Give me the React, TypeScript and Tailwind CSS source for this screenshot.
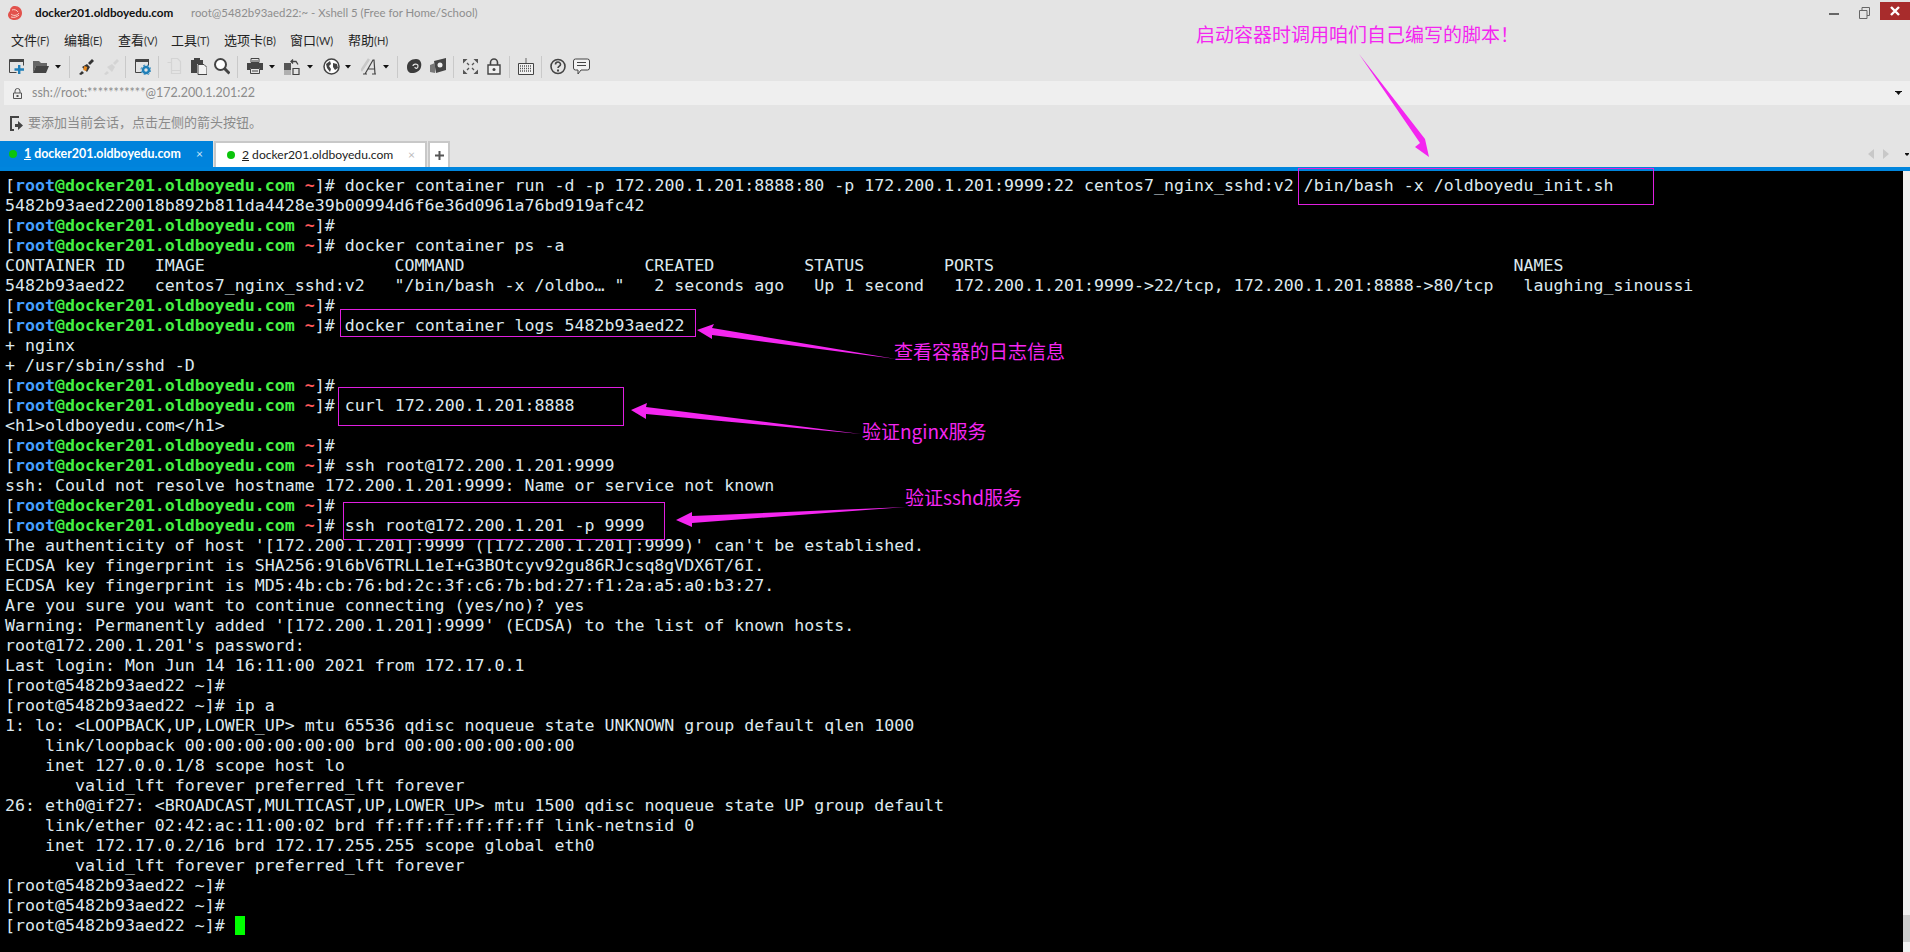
import React from "react";

const ui = "font-['Lato','Noto_Sans_CJK_SC',sans-serif]";
const cjk = "font-['Noto_Sans_CJK_SC',sans-serif]";

const P = ({ children }: { children?: React.ReactNode }) => (
  <>
    <span>[</span>
    <span className="font-bold text-[#46a0ff]">root</span>
    <span className="font-bold text-[#44f044]">@docker201.oldboyedu.com</span>
    <span> </span>
    <span className="font-bold text-[#ff5a5a]">~</span>
    <span>]# </span>
    {children}
  </>
);

const lines: React.ReactNode[] = [
  <P>docker container run -d -p 172.200.1.201:8888:80 -p 172.200.1.201:9999:22 centos7_nginx_sshd:v2 /bin/bash -x /oldboyedu_init.sh</P>,
  "5482b93aed220018b892b811da4428e39b00994d6f6e36d0961a76bd919afc42",
  <P />,
  <P>docker container ps -a</P>,
  "CONTAINER ID   IMAGE                   COMMAND                  CREATED         STATUS        PORTS                                                    NAMES",
  "5482b93aed22   centos7_nginx_sshd:v2   \"/bin/bash -x /oldbo… \"   2 seconds ago   Up 1 second   172.200.1.201:9999->22/tcp, 172.200.1.201:8888->80/tcp   laughing_sinoussi",
  <P />,
  <P>docker container logs 5482b93aed22</P>,
  "+ nginx",
  "+ /usr/sbin/sshd -D",
  <P />,
  <P>curl 172.200.1.201:8888</P>,
  "<h1>oldboyedu.com</h1>",
  <P />,
  <P>ssh root@172.200.1.201:9999</P>,
  "ssh: Could not resolve hostname 172.200.1.201:9999: Name or service not known",
  <P />,
  <P>ssh root@172.200.1.201 -p 9999</P>,
  "The authenticity of host '[172.200.1.201]:9999 ([172.200.1.201]:9999)' can't be established.",
  "ECDSA key fingerprint is SHA256:9l6bV6TRLL1eI+G3BOtcyv92gu86RJcsq8gVDX6T/6I.",
  "ECDSA key fingerprint is MD5:4b:cb:76:bd:2c:3f:c6:7b:bd:27:f1:2a:a5:a0:b3:27.",
  "Are you sure you want to continue connecting (yes/no)? yes",
  "Warning: Permanently added '[172.200.1.201]:9999' (ECDSA) to the list of known hosts.",
  "root@172.200.1.201's password:",
  "Last login: Mon Jun 14 16:11:00 2021 from 172.17.0.1",
  "[root@5482b93aed22 ~]#",
  "[root@5482b93aed22 ~]# ip a",
  "1: lo: <LOOPBACK,UP,LOWER_UP> mtu 65536 qdisc noqueue state UNKNOWN group default qlen 1000",
  "    link/loopback 00:00:00:00:00:00 brd 00:00:00:00:00:00",
  "    inet 127.0.0.1/8 scope host lo",
  "       valid_lft forever preferred_lft forever",
  "26: eth0@if27: <BROADCAST,MULTICAST,UP,LOWER_UP> mtu 1500 qdisc noqueue state UP group default",
  "    link/ether 02:42:ac:11:00:02 brd ff:ff:ff:ff:ff:ff link-netnsid 0",
  "    inet 172.17.0.2/16 brd 172.17.255.255 scope global eth0",
  "       valid_lft forever preferred_lft forever",
  "[root@5482b93aed22 ~]#",
  "[root@5482b93aed22 ~]#",
  <>
    [root@5482b93aed22 ~]# <span className="inline-block w-[10px] h-[19px] bg-[#00ff00] align-top" />
  </>,
];

const Sep = ({ ml }: { ml: number }) => (
  <div className="w-px h-[22px] bg-[#c9c9c9] shrink-0" style={{ marginLeft: ml }} />
);
const Caret = ({ ml }: { ml: number }) => (
  <svg width="6" height="4" viewBox="0 0 6 4" className="shrink-0" style={{ marginLeft: ml }}>
    <path d="M0 0h6L3 3.5z" fill="#111" />
  </svg>
);
const I = ({ ml, w = 16, h = 17, children }: { ml: number; w?: number; h?: number; children: React.ReactNode }) => (
  <svg width={w} height={h} viewBox={`0 0 ${w} ${h}`} className="shrink-0" style={{ marginLeft: ml }}>
    {children}
  </svg>
);

const Toolbar = () => (
  <div className="flex items-center h-[29px] pl-[9px]">
    <I ml={0}>
      <path d="M.5 1.5h14v6M.5 1.5v13h7" fill="none" stroke="#444" />
      <path d="M1 1h14v3H1z" fill="#444" />
      <path d="M11 8h2.4v3.3H17v2.4h-3.6V17H11v-3.3H7.500v-2.4H11z" fill="#1f7fb8" transform="translate(-2 -1)" />
    </I>
    <I ml={8}>
      <path d="M0 3h6l2 2h6v3H3L0 15z" fill="#666" />
      <path d="M3 8h13l-3 7H0z" fill="#444" />
    </I>
    <Caret ml={6} />
    <Sep ml={8} />
    <I ml={8}>
      <path d="M1 16l3-3 2 2-3 2zM4 9l5-3 3 3-3 5z" fill="#333" />
      <path d="M6 9l3 1M5.500 11l3 1" stroke="#e8891f" strokeWidth="2" />
      <path d="M10 5l4-4 2 2-4 4z" fill="#333" />
    </I>
    <I ml={9}>
      <path d="M1 16l3-3 2 2-3 2zM4 9l5-3 3 3-3 5z" fill="#d4d4d4" />
      <path d="M10 5l4-4 2 2-4 4z" fill="#d4d4d4" />
    </I>
    <Sep ml={6} />
    <I ml={9} w={16}>
      <path d="M.5 1.500h13v6M.5 1.500v13h6" fill="none" stroke="#444" />
      <path d="M1 1h13v3H1z" fill="#444" />
      <circle cx="11" cy="12" r="3" fill="none" stroke="#1f7fb8" strokeWidth="2.500" />
      <circle cx="11" cy="12" r="5" fill="none" stroke="#1f7fb8" strokeWidth="1" strokeDasharray="2 2" />
    </I>
    <Sep ml={7} />
    <I ml={8}>
      <path d="M4.500.5h6l3 3v9h-9zM.5 4.500h4v11h9v-3" fill="none" stroke="#d4d4d4" strokeWidth="1.200" />
    </I>
    <I ml={8}>
      <path d="M0 2h3V0h6v2h3v4H6v9H0z" fill="#444" />
      <path d="M7 6.500h6l3 3v7H7z" fill="#f2f2f2" stroke="#444" />
    </I>
    <I ml={7}>
      <circle cx="6.500" cy="6.500" r="5.500" fill="#fff" stroke="#444" strokeWidth="2" />
      <path d="M10.500 10.500l5 5" stroke="#444" strokeWidth="3" />
    </I>
    <Sep ml={7} />
    <I ml={9}>
      <path d="M4 0.500h8v4H4z" fill="none" stroke="#444" />
      <path d="M0 5h16v7h-3v-2H3v2H0z" fill="#444" />
      <path d="M3.500 10.500h9v5h-9z" fill="none" stroke="#444" />
      <path d="M5 3h6M5 13h6" stroke="#444" />
    </I>
    <Caret ml={6} />
    <I ml={9}>
      <path d="M0 5h7v7H0z" fill="#555" />
      <path d="M0 12h7v5H0z" fill="#b0b0b0" />
      <path d="M9 10.500h6v6H9z" fill="none" stroke="#444" strokeWidth="1.200" />
      <path d="M9 1.500l-2 2 2 2M7 3.500h5l2 3" fill="none" stroke="#444" strokeWidth="1.300" />
    </I>
    <Caret ml={7} />
    <I ml={10} w={17}>
      <circle cx="8.500" cy="8.500" r="7.500" fill="#fff" stroke="#444" strokeWidth="1.500" />
      <path d="M3 6l4-3 1 3-2 2 2 3-1 3-3-4zM10 5l4 1 1 4-3 2-2-3z" fill="#444" />
    </I>
    <Caret ml={5} />
    <I ml={10} w={16}>
      <path d="M0 13L8 1" stroke="#c8c8c8" strokeWidth="2.500" />
      <path d="M2 16h4M11 16h4M4 16L12 2h1l1 14M7 11h7" fill="none" stroke="#444" strokeWidth="1.200" />
    </I>
    <Caret ml={6} />
    <Sep ml={8} />
    <I ml={8} w={17}>
      <path d="M1 9c0-5 4-8 9-8s6 5 5 8c-1 4-5 6-9 6-3 0-5-2-5-6z" fill="#3c3c3c" />
      <path d="M7 8c0-2 5-3 5 0s-3 3-3 1" fill="none" stroke="#e4e4e4" strokeWidth="1.200" />
    </I>
    <I ml={7}>
      <path d="M4 3l12-3v12l-10 3z" fill="#444" />
      <path d="M0 7l5-2v10l-5-1z" fill="#777" />
      <circle cx="10" cy="7" r="2.500" fill="#eee" />
    </I>
    <Sep ml={7} />
    <I ml={9} w={15} h={15}>
      <path d="M0 0h4.500L0 4.500zM15 0v4.500L10.500 0zM0 15v-4.500L4.500 15zM15 15h-4.500L15 10.500z" fill="#555" />
      <path d="M4 4l2 2M11 4L9 6M4 11l2-2M11 11L9 9" stroke="#555" strokeWidth="1.300" />
    </I>
    <I ml={9} w={14}>
      <path d="M3.500 7V4.500a3.500 3.500 0 017 0V7" fill="none" stroke="#444" strokeWidth="1.600" />
      <path d="M1 7h12v9H1z" fill="#f0f0f0" stroke="#444" strokeWidth="1.400" />
      <circle cx="7" cy="11.500" r="1.500" fill="#444" />
    </I>
    <Sep ml={8} />
    <I ml={8}>
      <path d="M8 0v5" stroke="#666" />
      <path d="M.5 5.500h15v11H.5z" fill="#f2f2f2" stroke="#444" />
      <path d="M2 8h12M2 10.500h12M2 13h12" stroke="#555" strokeDasharray="1 1" strokeWidth="1.400" />
    </I>
    <Sep ml={7} />
    <I ml={8}>
      <circle cx="8" cy="8.500" r="7" fill="none" stroke="#444" strokeWidth="1.600" />
      <path d="M5.500 6.500a2.500 2.500 0 115 0c0 1.500-2.500 1.800-2.500 3.500" fill="none" stroke="#444" strokeWidth="1.600" />
      <path d="M7 11.500h2v2H7z" fill="#444" />
    </I>
    <I ml={7} w={17}>
      <path d="M2.500 1h12a2 2 0 012 2v7a2 2 0 01-2 2H8l-3 4v-4H2.500a2 2 0 01-2-2V3a2 2 0 012-2z" fill="#f2f2f2" stroke="#444" />
      <path d="M4 4.500h9M4 7.500h9" stroke="#444" />
    </I>
  </div>
);

const MenuItem = ({ t, k, w }: { t: string; k: string; w: number }) => (
  <div className="shrink-0 text-[#222]" style={{ width: w }}>
    <span className="text-[13px]">{t}</span>
    <span className="text-[11px] text-[#333]">({k})</span>
  </div>
);

const Dot = () => <span className="w-2 h-2 rounded-full bg-[#0cc40c] shrink-0" />;

export default function App() {
  return (
    <div className={`relative flex flex-col w-[1910px] h-[952px] overflow-hidden bg-[#e4e4e4] ${ui}`}>
      {/* title bar */}
      <div className="flex items-center h-[26px] shrink-0 relative">
        <svg width="16" height="16" viewBox="0 0 16 16" className="ml-[7px] shrink-0">
          <path d="M8 1c4 0 7 3 7 7s-3 7-7 7-7-2-7-5c0-2 1-3 2-4 0-3 2-5 5-5z" fill="#e2524c" />
          <path d="M4 9c2 2 6 2 8-1M5 5c2-1 5 0 6 2M4 12c3 1 6 0 8-2" fill="none" stroke="#fbd0c8" strokeWidth="1" />
        </svg>
        <span className="ml-[12px] w-[156px] text-[11.700px] font-bold text-[#111] whitespace-nowrap">docker201.oldboyedu.com</span>
        <span className="text-[11.400px] text-[#8e8e8e] whitespace-nowrap">root@5482b93aed22:~ - Xshell 5 (Free for Home/School)</span>
        <div className="ml-auto flex items-center h-full">
          <div className="w-[10px] h-[2px] bg-[#666] mt-[2px]" />
          <svg width="11" height="12" viewBox="0 0 11 12" className="ml-[20px] mb-[1px]">
            <path d="M.5 3.500h7.500v8H.5zM3 3V.5h7.500v8H8" fill="none" stroke="#666" />
          </svg>
          <div className="ml-[10px] flex items-center justify-center w-[30px] h-[18px] mt-[-4px] bg-[#a82c2c]">
            <svg width="10" height="10" viewBox="0 0 10 10">
              <path d="M1 1l8 8M9 1L1 9" stroke="#fff" strokeWidth="2.400" />
            </svg>
          </div>
        </div>
      </div>
      {/* menu */}
      <div className="flex items-center h-[26px] shrink-0 pl-[11px]">
        <MenuItem t="文件" k="F" w={53} />
        <MenuItem t="编辑" k="E" w={54} />
        <MenuItem t="查看" k="V" w={53} />
        <MenuItem t="工具" k="T" w={53} />
        <MenuItem t="选项卡" k="B" w={66} />
        <MenuItem t="窗口" k="W" w={58} />
        <MenuItem t="帮助" k="H" w={60} />
      </div>
      <Toolbar />
      {/* address bar */}
      <div className="flex items-center h-[24px] shrink-0 ml-[4px] pl-[9px] bg-[#efefef]">
        <svg width="9" height="11" viewBox="0 0 9 11" className="shrink-0">
          <path d="M2 5V3a2.500 2.500 0 015 0v2" fill="none" stroke="#555" />
          <path d="M.5 5h8v5.500h-8z" fill="none" stroke="#555" />
          <path d="M3.500 7h2v2h-2z" fill="#555" />
        </svg>
        <span className="ml-[10px] text-[12.500px] text-[#8c8c8c] whitespace-nowrap">ssh://root:***********@172.200.1.201:22</span>
        <svg width="7" height="5" viewBox="0 0 7 5" className="ml-auto mr-[8px]">
          <path d="M0 0h7v1H6L3.500 4 1 1H0z" fill="#111" />
        </svg>
      </div>
      {/* hint row */}
      <div className="flex items-center h-[36px] shrink-0 pl-[10px]">
        <svg width="13" height="15" viewBox="0 0 13 15" className="shrink-0">
          <path d="M9 1H1v13h3" fill="none" stroke="#444" strokeWidth="2" />
          <path d="M5 8h3V5l5 4.500L8 14v-3H5z" fill="#444" />
        </svg>
        <span className="ml-[5px] text-[13px] text-[#8a8a8a] whitespace-nowrap">要添加当前会话，点击左侧的箭头按钮。</span>
      </div>
      {/* tabs */}
      <div className="flex h-[26px] shrink-0 items-stretch relative">
        <div className="flex items-center w-[213px] bg-[#0083dc] text-white pl-[9px]">
          <Dot />
          <span className="ml-[7px] text-[12.400px] font-bold whitespace-nowrap"><span className="underline">1</span> docker201.oldboyedu.com</span>
          <span className="ml-auto mr-[10px] text-[12px] text-[#cfe6f7]">×</span>
        </div>
        <div className="flex items-center w-[213px] ml-[1px] bg-white border-2 border-b-0 border-[#c8c8c8] pl-[11px]">
          <Dot />
          <span className="ml-[7px] text-[12.100px] text-[#222] whitespace-nowrap"><span className="underline">2</span> docker201.oldboyedu.com</span>
          <span className="ml-auto mr-[10px] text-[12px] text-[#bbb]">×</span>
        </div>
        <div className="flex items-center justify-center w-[22px] ml-[1px] bg-white border-2 border-b-0 border-[#c8c8c8]">
          <svg width="9" height="9" viewBox="0 0 9 9"><path d="M4.500 0v9M0 4.500h9" stroke="#555" strokeWidth="2" /></svg>
        </div>
        <div className="ml-auto flex items-center pr-[1px]">
          <svg width="6" height="10" viewBox="0 0 6 10"><path d="M6 0v10L0 5z" fill="#c8c8c8" /></svg>
          <svg width="6" height="10" viewBox="0 0 6 10" className="ml-[9px]"><path d="M0 0v10l6-5z" fill="#c8c8c8" /></svg>
          <svg width="4" height="3" viewBox="0 0 4 3" className="ml-[16px]"><path d="M0 0h4v1L2 3 0 1z" fill="#111" /></svg>
        </div>
      </div>
      <div className="h-[4px] shrink-0 bg-[#0085dd]" />
      {/* terminal */}
      <div className="flex flex-1 min-h-0">
        <div className="flex-1 bg-black pt-[5px] pl-[5px] overflow-hidden font-['DejaVu_Sans_Mono',monospace] text-[16.6px] leading-[20px] text-[#dce8ee]">
          {lines.map((l, i) => (
            <div key={i} className="h-[20px] whitespace-pre">{l}</div>
          ))}
        </div>
        <div className="flex flex-col w-[7px] shrink-0 bg-[#f0f0f0]">
          <div className="mt-auto mb-[10px] h-[27px] bg-[#cdcdcd]" />
        </div>
      </div>

      {/* annotations */}
      <div className="absolute left-[1298px] top-[168px] w-[356px] h-[37px] border border-[#e01fe0]" />
      <div className="absolute left-[340px] top-[309px] w-[356px] h-[28px] border border-[#e01fe0]" />
      <div className="absolute left-[338px] top-[387px] w-[286px] h-[39px] border border-[#e01fe0]" />
      <div className="absolute left-[343px] top-[502px] w-[322px] h-[38px] border border-[#e01fe0]" />
      <svg width="1910" height="952" viewBox="0 0 1910 952" className="absolute left-0 top-0 pointer-events-none">
        <path d="M1359 54L1425 139 1429 157 1415 147 1420 143z" fill="#f426f0" />
        <path d="M697 330L714 324 712 328 896 359 712 335 712 339z" fill="#f426f0" />
        <path d="M631 410L647 403 646 407 861 434 646 414 646 419z" fill="#f426f0" />
        <path d="M676 520L692 512 692 516 906 507 692 523 692 527z" fill="#f426f0" />
      </svg>
      <div className={`absolute left-[1196px] top-[21px] text-[19px] leading-[26px] text-[#f426f0] whitespace-nowrap ${cjk}`}>启动容器时调用咱们自己编写的脚本！</div>
      <div className={`absolute left-[894px] top-[338px] text-[19px] leading-[26px] text-[#f426f0] whitespace-nowrap ${cjk}`}>查看容器的日志信息</div>
      <div className={`absolute left-[862px] top-[418px] text-[19px] leading-[26px] text-[#f426f0] whitespace-nowrap ${cjk}`}>验证nginx服务</div>
      <div className={`absolute left-[905px] top-[484px] text-[19px] leading-[26px] text-[#f426f0] whitespace-nowrap ${cjk}`}>验证sshd服务</div>
    </div>
  );
}
